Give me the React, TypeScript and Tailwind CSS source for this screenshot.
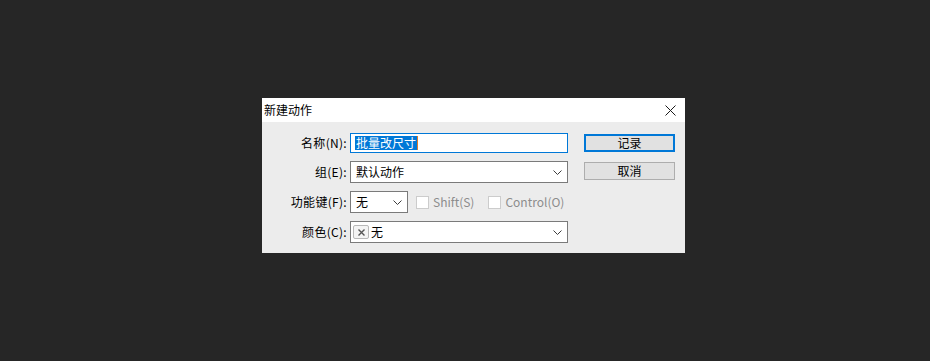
import type { ReactNode } from 'react';

const font = { fontFamily: '"Noto Sans CJK SC", "Liberation Sans", sans-serif' };

function Chevron() {
  return (
    <svg width="9" height="5" viewBox="0 0 9 5" className="shrink-0">
      <polyline points="0.5,0.5 4.5,4.5 8.5,0.5" fill="none" stroke="#3c3c3c" strokeWidth="1" />
    </svg>
  );
}

function Label({ children }: { children: ReactNode }) {
  return (
    <div className="flex items-center justify-end pr-[3px] text-[12px] tracking-[0.3px] text-black">{children}</div>
  );
}

function Select({ children, className = '' }: { children: ReactNode; className?: string }) {
  return (
    <div className={`flex h-full items-center justify-between border border-[#7a7a7a] bg-white pl-[5px] pr-[5px] text-[12px] text-black ${className}`}>
      <div className="flex items-center">{children}</div>
      <Chevron />
    </div>
  );
}

function Checkbox({ label }: { label: string }) {
  return (
    <div className="flex items-center gap-[4px] text-[12px] text-[#8c8c8c]">
      <span className="h-[13px] w-[13px] border border-[#cccccc] bg-white" />
      <span>{label}</span>
    </div>
  );
}

export default function App() {
  return (
    <div className="min-h-[361px] w-full overflow-hidden bg-[#262626] pt-[98px] pl-[262px]" style={font}>
      <div className="w-[423px] bg-[#ececec]">
        {/* Title bar */}
        <div className="flex h-[24px] items-center justify-between bg-white pl-[2px] pr-[9px]">
          <span className="text-[12px] text-black">新建动作</span>
          <svg width="11" height="11" viewBox="0 0 11 11">
            <path d="M0.5 0.5 L10.5 10.5 M10.5 0.5 L0.5 10.5" stroke="#1a1a1a" strokeWidth="1" />
          </svg>
        </div>

        {/* Body */}
        <div className="flex pt-[11px] pb-[10px] pr-[10px]">
          <div className="grid w-[306px] grid-cols-[88px_218px] grid-rows-[20px_22px_22px_22px] gap-y-[8px]">
            <Label>名称(N):</Label>
            <div className="flex items-center border border-[#0078d7] bg-white pl-[4px]">
              <span className="bg-[#0078d7] px-[1px] text-[12px] leading-[14px] text-white">批量改尺寸</span>
              <span className="h-[14px] w-[1px] bg-[#e07b2a]" />
            </div>

            <Label>组(E):</Label>
            <Select>默认动作</Select>

            <Label>功能键(F):</Label>
            <div className="flex items-center">
              <Select className="w-[58px]">无</Select>
              <div className="ml-[8px]">
                <Checkbox label="Shift(S)" />
              </div>
              <div className="ml-[14px]">
                <Checkbox label="Control(O)" />
              </div>
            </div>

            <Label>颜色(C):</Label>
            <div className="flex h-full items-center justify-between border border-[#7a7a7a] bg-white pl-[2px] pr-[5px] text-[12px] text-black">
              <div className="flex items-center gap-[2px]">
                <span className="flex h-[14px] w-[16px] items-center justify-center rounded-[2px] border border-[#b8b8b8] bg-[#f4f4f4]">
                  <svg width="7" height="7" viewBox="0 0 7 7">
                    <path d="M0.5 0.5 L6.5 6.5 M6.5 0.5 L0.5 6.5" stroke="#555555" strokeWidth="1.4" />
                  </svg>
                </span>
                <span>无</span>
              </div>
              <Chevron />
            </div>
          </div>

          <div className="ml-[16px] flex flex-col gap-[10px] pt-[1px]">
            <button className="h-[18px] w-[91px] border-2 border-[#0078d7] bg-[#e1e1e1] text-[12px] leading-none text-black">
              记录
            </button>
            <button className="h-[18px] w-[91px] border border-[#adadad] bg-[#e1e1e1] text-[12px] leading-none text-black">
              取消
            </button>
          </div>
        </div>
      </div>
    </div>
  );
}
